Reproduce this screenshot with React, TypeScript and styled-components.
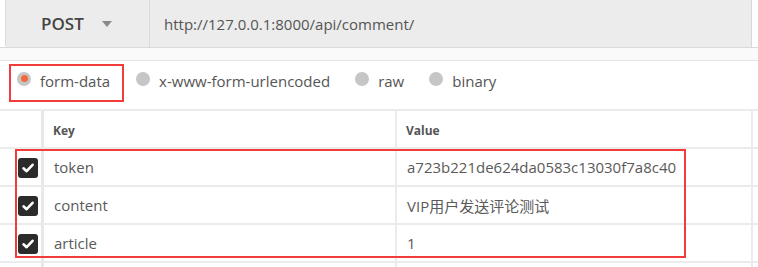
import React from "react";
import styled, { createGlobalStyle } from "styled-components";

const Global = createGlobalStyle`
  html, body { margin: 0; padding: 0; background: #ffffff; }
  body { font-family: "Open Sans", "Noto Sans CJK SC", sans-serif; color: #505050; }
  * { box-sizing: border-box; }
`;

const Page = styled.div`
  width: 758px;
  height: 267px;
  overflow: hidden;
  background: #fff;
`;

const TopBar = styled.div`
  display: flex;
  height: 48px;
  padding: 0 6px 0 5px;
  border-bottom: 1px solid #dadada;
`;

const MethodBox = styled.div`
  width: 145px;
  display: flex;
  align-items: center;
  padding-left: 35px;
  gap: 18px;
  background: #ececec;
  border: 1px solid #dadada;
  border-top: none;
  border-bottom: none;
  border-bottom-left-radius: 3px;
  font-size: 17px;
  font-weight: 600;
  color: #454545;
`;

const Caret = styled.span`
  width: 0;
  height: 0;
  border-left: 5px solid transparent;
  border-right: 5px solid transparent;
  border-top: 6px solid #8a8a8a;
  margin-top: 1px;
`;

const UrlBox = styled.div`
  flex: 1;
  display: flex;
  align-items: center;
  padding-left: 14px;
  background: #ececec;
  border-right: 1px solid #d8d8d8;
  font-size: 15px;
  color: #555;
`;

const Strip = styled.div`
  height: 13px;
  background: #fafafa;
  border-bottom: 1px solid #e6e6e6;
`;

const RadioRow = styled.div`
  display: flex;
  align-items: flex-start;
  height: 48px;
  padding: 3px 0 0 9px;
  gap: 12px;
`;

const Option = styled.label<{ $highlight?: boolean }>`
  display: flex;
  align-items: center;
  gap: 9px;
  height: 38px;
  padding: ${(p) => (p.$highlight ? "0 12px 4px 6px" : "0 13px 4px 0")};
  border: 2px solid ${(p) => (p.$highlight ? "#f23b3b" : "transparent")};
  border-left-width: ${(p) => (p.$highlight ? "2px" : "0")};
  border-right-width: ${(p) => (p.$highlight ? "2px" : "0")};
  font-size: 15px;
  color: #555;
`;

const Radio = styled.span<{ $on?: boolean }>`
  width: 14px;
  height: 14px;
  border-radius: 50%;
  background: #c6c6c6;
  display: flex;
  align-items: center;
  justify-content: center;
  margin-top: -5px;
  &::after {
    content: "";
    width: 7px;
    height: 7px;
    border-radius: 50%;
    background: ${(p) => (p.$on ? "#f26a3b" : "transparent")};
  }
`;

const Table = styled.div`
  position: relative;
  border-top: 2px solid #ebebeb;
`;

const Row = styled.div`
  display: grid;
  grid-template-columns: 44px 353px 356px 1fr;
  height: 38px;
  border-bottom: 2px solid #ebebeb;
`;

const CheckCell = styled.div`
  display: flex;
  align-items: center;
  padding-left: 18px;
  border-right: 3px solid #e8e8e8;
`;

const Cell = styled.div<{ $head?: boolean }>`
  display: flex;
  align-items: center;
  padding-left: ${(p) => (p.$head ? "9px" : "10px")};
  border-right: 2px solid #ebebeb;
  font-size: ${(p) => (p.$head ? "12px" : "15px")};
  font-weight: ${(p) => (p.$head ? 700 : 400)};
  color: ${(p) => (p.$head ? "#555" : "#5a5a5a")};
  white-space: nowrap;
  padding-top: ${(p) => (p.$head ? "2px" : "0")};
`;

const Spare = styled.div``;

const Box = styled.span`
  width: 20px;
  height: 20px;
  border-radius: 3px;
  background: #2b2b2b;
  display: flex;
  align-items: center;
  justify-content: center;
  margin-top: 2px;
`;

const Annotation = styled.div`
  position: absolute;
  left: 15px;
  top: 38px;
  width: 671px;
  height: 109px;
  border: 2px solid #f23b3b;
  pointer-events: none;
`;

const Check = () => (
  <Box>
    <svg width="14" height="14" viewBox="0 0 14 14">
      <path d="M2.5 7.3 L5.6 10.2 L11.6 3.8" fill="none" stroke="#fff" strokeWidth="2.6" strokeLinecap="round" strokeLinejoin="round" />
    </svg>
  </Box>
);

const rows = [
  { key: "token", value: "a723b221de624da0583c13030f7a8c40" },
  { key: "content", value: "VIP用户发送评论测试" },
  { key: "article", value: "1" },
];

export default function App() {
  return (
    <Page>
      <Global />
      <TopBar>
        <MethodBox>
          POST <Caret />
        </MethodBox>
        <UrlBox>http://127.0.0.1:8000/api/comment/</UrlBox>
      </TopBar>
      <Strip />
      <RadioRow>
        <Option $highlight>
          <Radio $on />
          form-data
        </Option>
        <Option>
          <Radio />
          x-www-form-urlencoded
        </Option>
        <Option>
          <Radio />
          raw
        </Option>
        <Option>
          <Radio />
          binary
        </Option>
      </RadioRow>
      <Table>
        <Row>
          <CheckCell />
          <Cell $head>Key</Cell>
          <Cell $head>Value</Cell>
          <Spare />
        </Row>
        {rows.map((r) => (
          <Row key={r.key}>
            <CheckCell>
              <Check />
            </CheckCell>
            <Cell>{r.key}</Cell>
            <Cell>{r.value}</Cell>
            <Spare />
          </Row>
        ))}
        <Row>
          <CheckCell />
          <Cell />
          <Cell />
          <Spare />
        </Row>
        <Annotation />
      </Table>
    </Page>
  );
}
